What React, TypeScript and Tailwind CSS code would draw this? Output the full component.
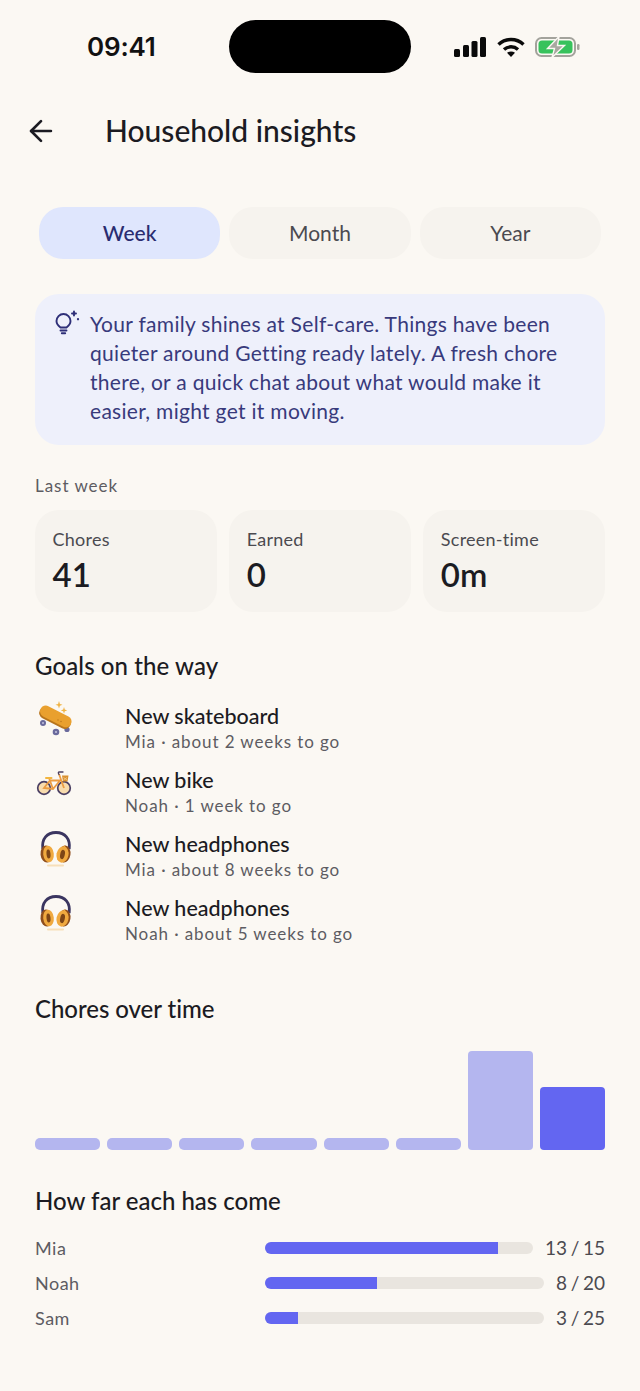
import React from 'react';
import { ArrowLeft } from 'lucide-react';

const FONT = "font-['Lato','Noto_Sans',sans-serif]";

const Skateboard = () => (
  <svg width="38" height="36" viewBox="0 0 38 36" className="overflow-visible">
    <path d="M23 0l.9 2.900 2.600.9-2.600.9-.9 2.900-.9-2.900-2.600-.9 2.600-.9zM28 6l.8 2.600 2.400.8-2.400.8-.8 2.600-.8-2.600-2.400-.8 2.400-.8z" fill="#f0b445" />
    <circle cx="7" cy="22" r="3" fill="#6a6a9c" />
    <circle cx="20" cy="31" r="3.300" fill="#6a6a9c" />
    <circle cx="31" cy="28.500" r="2.600" fill="#6a6a9c" />
    <circle cx="7" cy="22" r="1" fill="#c2c2dc" />
    <circle cx="20" cy="31" r="1.100" fill="#c2c2dc" />
    <rect x="2" y="11" width="34" height="12" rx="6" transform="rotate(27 19 17)" fill="#b8751c" />
    <rect x="2" y="9.500" width="34" height="11.500" rx="5.700" transform="rotate(27 19 17)" fill="#e9a02e" />
    <circle cx="22" cy="19" r=".7" fill="#b8751c" />
    <circle cx="25" cy="20.500" r=".7" fill="#b8751c" />
  </svg>
);

const Bike = () => (
  <svg width="38" height="36" viewBox="0 0 38 36">
    <circle cx="8" cy="23" r="6.300" fill="#f8dcae" stroke="#4a3f63" strokeWidth="1.700" />
    <circle cx="28" cy="23" r="6.300" fill="#f8dcae" stroke="#4a3f63" strokeWidth="1.700" />
    <path d="M8 23L14 15.500h10L17 24zM17 24L13 13M23 9l5 14" fill="none" stroke="#ec9c42" strokeWidth="1.800" />
    <path d="M23 9.500c-1-1.500-1-2.500 .5-2.500h3.500" fill="none" stroke="#4a3f63" strokeWidth="1.300" strokeLinecap="round" />
    <rect x="9" y="12" width="7.500" height="2" rx="1" fill="#f2b63f" />
    <path d="M26 10.500h6.500l-1 6h-4.500z" fill="#d9902f" />
    <path d="M27.500 12.500l3.500 2.500M31 12.500l-3.500 2.500" stroke="#f6d49a" strokeWidth=".7" />
  </svg>
);

const Headphones = () => (
  <svg width="38" height="38" viewBox="0 0 38 38">
    <path d="M6.800 20C5.500 9.500 11 3.500 20 3.500s14.500 6 13.200 16.500" fill="none" stroke="#3a3560" strokeWidth="2.800" />
    <ellipse cx="10.500" cy="25" rx="6" ry="8.500" fill="#8f4e1c" transform="rotate(-6 10.500 25)" />
    <ellipse cx="28.500" cy="25" rx="6" ry="8.500" fill="#8f4e1c" transform="rotate(8 28.500 25)" />
    <ellipse cx="12.500" cy="25" rx="5.300" ry="8.300" fill="#f0a93f" transform="rotate(-6 12.500 25)" />
    <ellipse cx="26.500" cy="25.500" rx="6" ry="8.300" fill="#f0a93f" transform="rotate(12 26.500 25.500)" />
    <ellipse cx="12.500" cy="25" rx="2" ry="4.500" fill="#7d4516" transform="rotate(-6 12.500 25)" />
    <ellipse cx="26.500" cy="25.500" rx="2.300" ry="4.700" fill="#7d4516" transform="rotate(12 26.500 25.500)" />
    <path d="M27 19l1.500-3 1.500 3z" fill="#f0a93f" />
    <rect x="11" y="35.500" width="17" height="2" rx="1" fill="#f7dfba" />
  </svg>
);

const goals = [
  { icon: <Skateboard />, title: 'New skateboard', sub: 'Mia · about 2 weeks to go' },
  { icon: <Bike />, title: 'New bike', sub: 'Noah · 1 week to go' },
  { icon: <Headphones />, title: 'New headphones', sub: 'Mia · about 8 weeks to go' },
  { icon: <Headphones />, title: 'New headphones', sub: 'Noah · about 5 weeks to go' },
];

const stats = [
  { label: 'Chores', value: '41' },
  { label: 'Earned', value: '0' },
  { label: 'Screen-time', value: '0m' },
];

const progress = [
  { name: 'Mia', pct: 'w-[87%]', text: '13 / 15', track: 'w-[268px]' },
  { name: 'Noah', pct: 'w-[40%]', text: '8 / 20', track: 'w-[279px]' },
  { name: 'Sam', pct: 'w-[12%]', text: '3 / 25', track: 'w-[279px]' },
];

export default function App() {
  return (
    <div className={`w-[640px] h-[1391px] bg-[#fbf8f3] text-[#1b1b22] overflow-hidden ${FONT}`}>
      {/* Status bar */}
      <div className="h-[94px] flex items-start">
        <div className="w-[229px] pt-[31px] pl-[87px] text-[26px] leading-[32px] font-semibold tracking-[-0.2px] font-['Inter',sans-serif] text-[#111]">09:41</div>
        <div className="w-[182px] h-[53px] mt-[20px] bg-black rounded-[27px]" />
        <div className="flex items-center gap-[11px] pl-[43px] pt-[37px]">
          <svg width="32" height="20" viewBox="0 0 32 20" fill="#0a0a0a">
            <rect x="0" y="12" width="6" height="8" rx="1.500" />
            <rect x="9" y="8" width="6" height="12" rx="1.500" />
            <rect x="17.500" y="4" width="6" height="16" rx="1.500" />
            <rect x="26" y="0" width="6" height="20" rx="1.500" />
          </svg>
          <svg width="28" height="20" viewBox="0 0 28 20" fill="none" stroke="#0a0a0a" strokeWidth="3.400">
            <path d="M1.500 7.500C8.500 .8 19.500 .8 26.500 7.500" />
            <path d="M7 12.500c4-3.600 10-3.600 14 0" />
            <path d="M14 20l-4-4.200c2.300-1.700 5.700-1.700 8 0z" fill="#0a0a0a" stroke="none" />
          </svg>
          <svg width="45" height="20" viewBox="0 0 45 20" className="-ml-px">
            <rect x="1" y="1" width="39" height="18" rx="5.500" fill="none" stroke="#a3a39c" strokeWidth="2" />
            <rect x="3.500" y="3.500" width="34" height="13" rx="3.500" fill="#37c25c" />
            <path d="M24 -.5L12.500 11.500h7l-2.500 9L29.500 8.500h-7z" fill="#a8a8a0" stroke="#fbf8f3" strokeWidth="1.400" />
            <rect x="42" y="7" width="2.500" height="6" rx="1.200" fill="#a3a39c" />
          </svg>
        </div>
      </div>

      {/* Header */}
      <div className="h-[74px] flex items-center pl-[24px]">
        <ArrowLeft size={34} strokeWidth={1.9} className="text-[#1b1b22]" />
        <h1 className="ml-[47px] text-[30px] font-medium leading-none -translate-y-[1px]">Household insights</h1>
      </div>

      <div className="px-[35px]">
        {/* Period tabs */}
        <div className="mt-[39px] px-[4px] grid grid-cols-3 gap-[9px]">
          <div className="h-[52px] rounded-[24px] bg-[#dfe6fd] text-[#2a2c70] text-[21px] font-medium flex items-center justify-center">Week</div>
          <div className="h-[52px] rounded-[24px] bg-[#f6f3ee] text-[#4b4a50] text-[21px] flex items-center justify-center">Month</div>
          <div className="h-[52px] rounded-[24px] bg-[#f6f3ee] text-[#4b4a50] text-[21px] flex items-center justify-center">Year</div>
        </div>

        {/* Insight */}
        <div className="mt-[35px] h-[151px] rounded-[24px] bg-[#eef0fb] pl-[19px] pr-[30px] pt-[16px] flex gap-[8px]">
          <svg width="28" height="28" viewBox="0 0 28 28" fill="none" stroke="#2e2f78" strokeWidth="1.900" strokeLinecap="round" className="shrink-0">
            <path d="M6.500 17.500C4.500 16 2.500 14 2.500 11a7 7 0 0 1 14 0c0 3-2 5-4 6.500z" />
            <path d="M6.500 20.500h6M7.800 23.200h3.400" />
            <path d="M20 1.500v4M18 3.500h4" />
            <path d="M24 9v.3" strokeWidth="2.200" />
          </svg>
          <p className="-mt-[1px] text-[21px] leading-[29px] tracking-[0.3px] text-[#383a7c]">
            Your family shines at Self-care. Things have been quieter around Getting ready lately. A fresh chore there, or a quick chat about what would make it easier, might get it moving.
          </p>
        </div>

        {/* Last week stats */}
        <div className="mt-[31px] text-[17px] leading-[20px] tracking-[0.95px] text-[#5d5c62]">Last week</div>
        <div className="mt-[14px] grid grid-cols-3 gap-x-[12.5px]">
          {stats.map((s) => (
            <div key={s.label} className="h-[102px] rounded-[24px] bg-[#f6f3ee] pl-[17.5px] pt-[18px]">
              <div className="text-[18px] leading-[22px] text-[#4b4a50] tracking-[0.25px]">{s.label}</div>
              <div className="mt-[4px] text-[33px] leading-[40px] font-semibold">{s.value}</div>
            </div>
          ))}
        </div>

        {/* Goals */}
        <h2 className="mt-[40px] text-[24px] leading-[28px] tracking-[0.1px] font-medium">Goals on the way</h2>
        <div className="mt-[21px] flex flex-col">
          {goals.map((g, i) => (
            <div key={i} className="h-[64px] flex items-start">
              <div className="w-[90px] shrink-0 pl-[1px]">{g.icon}</div>
              <div className="pt-[2px]">
                <div className="text-[21.5px] leading-[26px] font-medium">{g.title}</div>
                <div className="mt-[2px] text-[17px] leading-[22px] tracking-[0.9px] text-[#5d5c62]">{g.sub}</div>
              </div>
            </div>
          ))}
        </div>

        {/* Chores over time */}
        <h2 className="mt-[37px] text-[24px] leading-[30px] tracking-[-0.05px] font-medium">Chores over time</h2>
        <div className="mt-[26px] h-[100px] flex items-end gap-[7px]">
          {[0, 1, 2, 3, 4, 5].map((i) => (
            <div key={i} className="flex-1 h-[12px] rounded-[5px] bg-[#b4b6ef]" />
          ))}
          <div className="flex-1 h-[99px] rounded-[4px] bg-[#b4b6ef]" />
          <div className="flex-1 h-[63px] rounded-[4px] bg-[#6366f1]" />
        </div>

        {/* Progress */}
        <h2 className="mt-[36px] text-[24px] leading-[30px] font-medium">How far each has come</h2>
        <div className="mt-[22px] flex flex-col gap-[15px]">
          {progress.map((p) => (
            <div key={p.name} className="h-[20px] flex items-center">
              <div className="w-[230px] text-[18px] tracking-[0.5px] text-[#5d5c62]">{p.name}</div>
              <div className={`${p.track} h-[12px] rounded-full bg-[#e9e5df] overflow-hidden`}>
                <div className={`${p.pct} h-full bg-[#6366f1]`} />
              </div>
              <div className="flex-1 text-right text-[19px] [word-spacing:-1.2px] text-[#4b4a50]">{p.text}</div>
            </div>
          ))}
        </div>
      </div>
    </div>
  );
}
